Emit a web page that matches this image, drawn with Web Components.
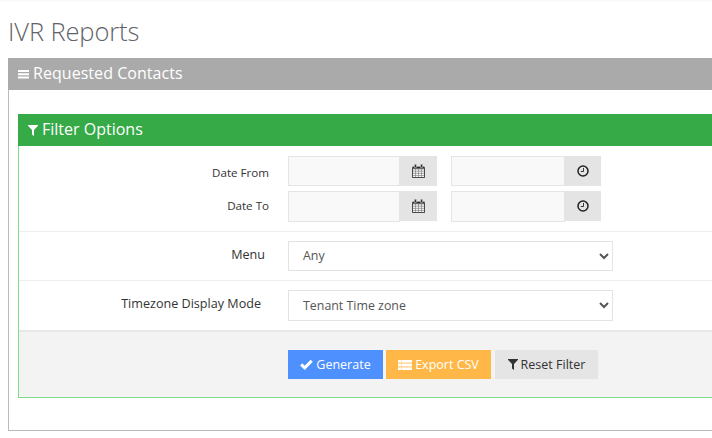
<!DOCTYPE html>
<html>
<head>
<meta charset="utf-8">
<title>IVR Reports</title>
<style>
html,body{margin:0;padding:0;background:#fff;overflow:hidden;height:438px;}
body{font-family:"Open Sans",sans-serif;color:#333;}
</style>
</head>
<body>
<report-page></report-page>
<script>
const icons = {
    bars:`<svg width="11" height="10" viewBox="0 0 11 10"><path fill="currentColor" d="M0 1h11v2H0zM0 4.2h11v2H0zM0 7.4h11v2H0z"/></svg>`,
    filter:`<svg width="10" height="11" viewBox="0 0 10 11"><path fill="currentColor" d="M0 0h10v.8L6 5v6L4 9.4V5L0 .8z"/></svg>`,
    check:`<svg width="13" height="11" viewBox="0 0 13 11"><path fill="none" stroke="currentColor" stroke-width="3" d="M1.2 5.4l3.5 3.4 7-7"/></svg>`,
    list:`<svg width="14" height="10" viewBox="0 0 14 10"><path fill="currentColor" d="M0 0h14v10H0z" opacity=".3"/><path fill="currentColor" d="M0 0h3.5v2.5H0zM4 0h10v2.5H4zM0 3.7h3.5v2.5H0zM4 3.7h10v2.5H4zM0 7.4h3.5V10H0zM4 7.4h10V10H4z"/></svg>`,
    calendar:`<svg width="13" height="14" viewBox="0 0 13 14"><path fill="#fff" opacity=".6" d="M.5 4h12v9.5H.5z"/><path fill="none" stroke="#777" stroke-width=".6" d="M.5 5h12v8.5H.5zM.5 7.2h12M.5 9.4h12M.5 11.5h12M3.5 5v8.5M6.5 5v8.5M9.5 5v8.5"/><path fill="none" stroke="#333" stroke-width=".8" d="M.5 3.5v10h12v-10"/><path fill="#2b2b2b" d="M.5 2.6h12v2H.5z"/><path fill="#2b2b2b" stroke="#e4e4e4" stroke-width=".5" d="M2.4.3h2v3.2h-2zM8.6.3h2v3.2h-2z"/></svg>`,
    clock:`<svg width="12" height="12" viewBox="0 0 12 12"><circle cx="6" cy="6" r="5" fill="none" stroke="#222" stroke-width="1.5"/><path fill="none" stroke="#222" stroke-width=".9" d="M6.5 3v3.5H3.8"/></svg>`
};

class ReportPage extends HTMLElement{
    constructor(){
        super();
        this.attachShadow({mode:'open'});
    }
    connectedCallback(){
        this.shadowRoot.innerHTML = `
            <style>
                :host{display:block;padding:0 0 0 8px;width:712px;border-top:2px solid #fafafa;box-sizing:border-box;overflow:hidden;}
                h1{margin:0;padding:10px 0 0 0;height:56px;box-sizing:border-box;font:300 25.5px/38px "Open Sans",sans-serif;color:#5f6368;letter-spacing:-.12px;}
            </style>
            <h1>IVR Reports</h1>
            <report-panel></report-panel>
        `;
    }
}

class ReportPanel extends HTMLElement{
    constructor(){
        super();
        this.attachShadow({mode:'open'});
    }
    connectedCallback(){
        this.shadowRoot.innerHTML = `
            <style>
                :host{display:block;border:1px solid #bbb;border-top:0;border-right:0;height:373px;box-sizing:border-box;}
                header{height:32px;margin-left:-1px;background:#aaa;color:#fff;display:flex;align-items:center;gap:4px;padding-left:10px;font:400 16px/28px "Open Sans",sans-serif;letter-spacing:.05px;}
                header span{margin-bottom:2px;}
                header svg{display:block;}
                .body{padding:24px 0 0 9px;}
            </style>
            <header>${icons.bars}<span>Requested Contacts</span></header>
            <div class="body"><filter-options></filter-options></div>
        `;
    }
}

class FilterOptions extends HTMLElement{
    constructor(){
        super();
        this.attachShadow({mode:'open'});
    }
    connectedCallback(){
        this.shadowRoot.innerHTML = `
            <style>
                :host{display:block;border:1px solid #7fdc8c;border-top:0;border-right:0;height:284px;box-sizing:border-box;}
                header{height:32px;margin-left:-1px;background:#35aa47;color:#fff;display:flex;align-items:center;gap:4px;padding-left:10px;font:400 16px/28px "Open Sans",sans-serif;}
                header span{margin-bottom:2px;}
                .row{display:grid;grid-template-columns:250px 1fr;column-gap:19px;border-bottom:1px solid #eee;box-sizing:border-box;font-size:12.6px;color:#333;}
                .dates{height:86px;padding-top:10px;font-size:11.6px;}
                .menu{height:49px;padding-top:9px;}
                .zone{height:49px;padding-top:9px;border-bottom:0;}
                .lab{text-align:right;line-height:30px;}
                .dates .lab{height:35px;line-height:33px;}
                .dates .lab.to{line-height:29px;}
                .menu .lab{padding-right:4px;line-height:27px;}
                .zone .lab{padding-right:8px;line-height:27px;}
                .inputs{display:grid;grid-template-columns:149px 150px;column-gap:14px;row-gap:5px;justify-content:start;grid-auto-rows:30px;}
                .labels{display:block;}
                select{display:block;width:325px;height:31px;box-sizing:border-box;border:1px solid #e3e3e3;background:#fff;padding:0 0 0 10px;margin:0;border-radius:0;font:400 12.4px "Open Sans",sans-serif;color:#555;outline:0;}
                .menu select{height:30px;padding-bottom:2px;}
                footer{height:67px;box-sizing:border-box;background:#f3f3f3;border-top:2px solid #e8e8e8;padding:18px 0 0 269px;display:flex;align-items:flex-start;}
            </style>
            <header>${icons.filter}<span>Filter Options</span></header>
            <div class="row dates">
                <div class="labels"><div class="lab">Date From</div><div class="lab to">Date To</div></div>
                <div class="inputs">
                    <addon-input icon="calendar" input-width="112"></addon-input>
                    <addon-input icon="clock" input-width="114"></addon-input>
                    <addon-input icon="calendar" input-width="112" tall></addon-input>
                    <addon-input icon="clock" input-width="114" tall></addon-input>
                </div>
            </div>
            <div class="row menu">
                <div class="lab">Menu</div>
                <div><select><option>Any</option></select></div>
            </div>
            <div class="row zone">
                <div class="lab">Timezone Display Mode</div>
                <div><select><option>Tenant Time zone</option></select></div>
            </div>
            <footer>
                <action-button color="#4d90fe" text="#fff" icon="check" width="95" style="margin-right:3px">Generate</action-button>
                <action-button color="#ffb848" text="#fff" icon="list" width="105" style="margin-right:4px">Export CSV</action-button>
                <action-button color="#e5e5e5" text="#333" icon="filter" width="103">Reset Filter</action-button>
            </footer>
        `;
    }
}

class AddonInput extends HTMLElement{
    constructor(){
        super();
        this.attachShadow({mode:'open'});
    }
    connectedCallback(){
        const w = this.getAttribute('input-width');
        const h = this.hasAttribute('tall') ? 31 : 30;
        this.shadowRoot.innerHTML = `
            <style>
                :host{display:flex;height:30px;background:#e4e4e4;align-items:flex-start;}
                input{display:block;box-sizing:border-box;width:${w}px;height:${h}px;margin:0;padding:0 6px;border:1px solid #e5e5e5;background:#f9f9f9;outline:0;border-radius:0;}
                span{flex:1;height:30px;display:flex;align-items:center;justify-content:center;}
                svg{display:block;}
            </style>
            <input type="text"><span>${icons[this.getAttribute('icon')]}</span>
        `;
    }
}

class ActionButton extends HTMLElement{
    constructor(){
        super();
        this.attachShadow({mode:'open'});
    }
    connectedCallback(){
        this.shadowRoot.innerHTML = `
            <style>
                :host{display:flex;align-items:center;justify-content:center;gap:3px;box-sizing:border-box;height:29px;width:${this.getAttribute('width')}px;background:${this.getAttribute('color')};color:${this.getAttribute('text')};font:400 12.5px "Open Sans",sans-serif;}
                svg{display:block;}
            </style>
            ${icons[this.getAttribute('icon')]}<slot></slot>
        `;
    }
}

customElements.define("action-button",ActionButton);
customElements.define("addon-input",AddonInput);
customElements.define("filter-options",FilterOptions);
customElements.define("report-panel",ReportPanel);
customElements.define("report-page",ReportPage);
</script>
</body>
</html>
